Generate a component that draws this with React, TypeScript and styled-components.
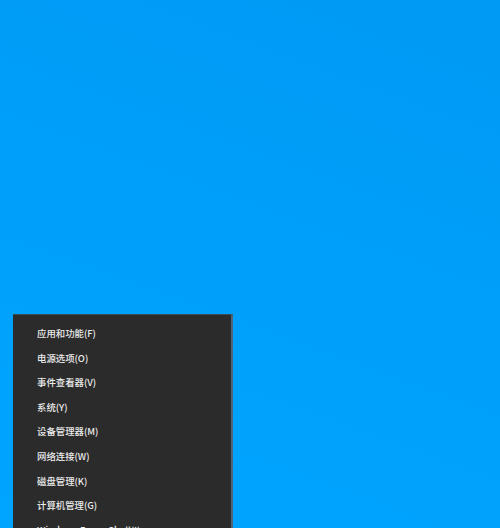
import React from 'react';
import styled, { createGlobalStyle } from 'styled-components';

const GlobalStyle = createGlobalStyle`
  html, body {
    margin: 0;
    padding: 0;
    width: 500px;
    height: 528px;
    overflow: hidden;
  }
`;

interface MenuEntry {
  label: string;
}

const entries: MenuEntry[] = [
  { label: '应用和功能(F)' },
  { label: '电源选项(O)' },
  { label: '事件查看器(V)' },
  { label: '系统(Y)' },
  { label: '设备管理器(M)' },
  { label: '网络连接(W)' },
  { label: '磁盘管理(K)' },
  { label: '计算机管理(G)' },
  { label: 'Windows PowerShell(I)' }
];

const Desktop = styled.div`
  width: 500px;
  height: 528px;
  box-sizing: border-box;
  padding: 314px 0 0 13px;
  overflow: hidden;
  background: linear-gradient(200deg, #0099f4 0%, #009ff9 45%, #00a5ff 100%);
`;

const Menu = styled.div`
  width: 220px;
  height: 240px;
  box-sizing: border-box;
  padding-top: 6px;
  background: #2b2b2b;
  border-top: 1px solid #3f4a52;
  border-right: 2px solid #4d6576;
  display: flex;
  flex-direction: column;
`;

const MenuItem = styled.div`
  height: 24.6px;
  line-height: 24.6px;
  flex-shrink: 0;
  padding-left: 24px;
  color: #ececec;
  font-family: "Microsoft YaHei", "Noto Sans CJK SC", sans-serif;
  font-size: 9.4px;
  font-weight: 500;
  white-space: nowrap;
  cursor: default;

  &:hover {
    background: #414141;
  }
`;

const App = () => {
  return (
    <>
      <GlobalStyle />
      <Desktop>
        <Menu>
          {entries.map((entry) => (
            <MenuItem key={entry.label}>{entry.label}</MenuItem>
          ))}
        </Menu>
      </Desktop>
    </>
  );
};

export default App;
